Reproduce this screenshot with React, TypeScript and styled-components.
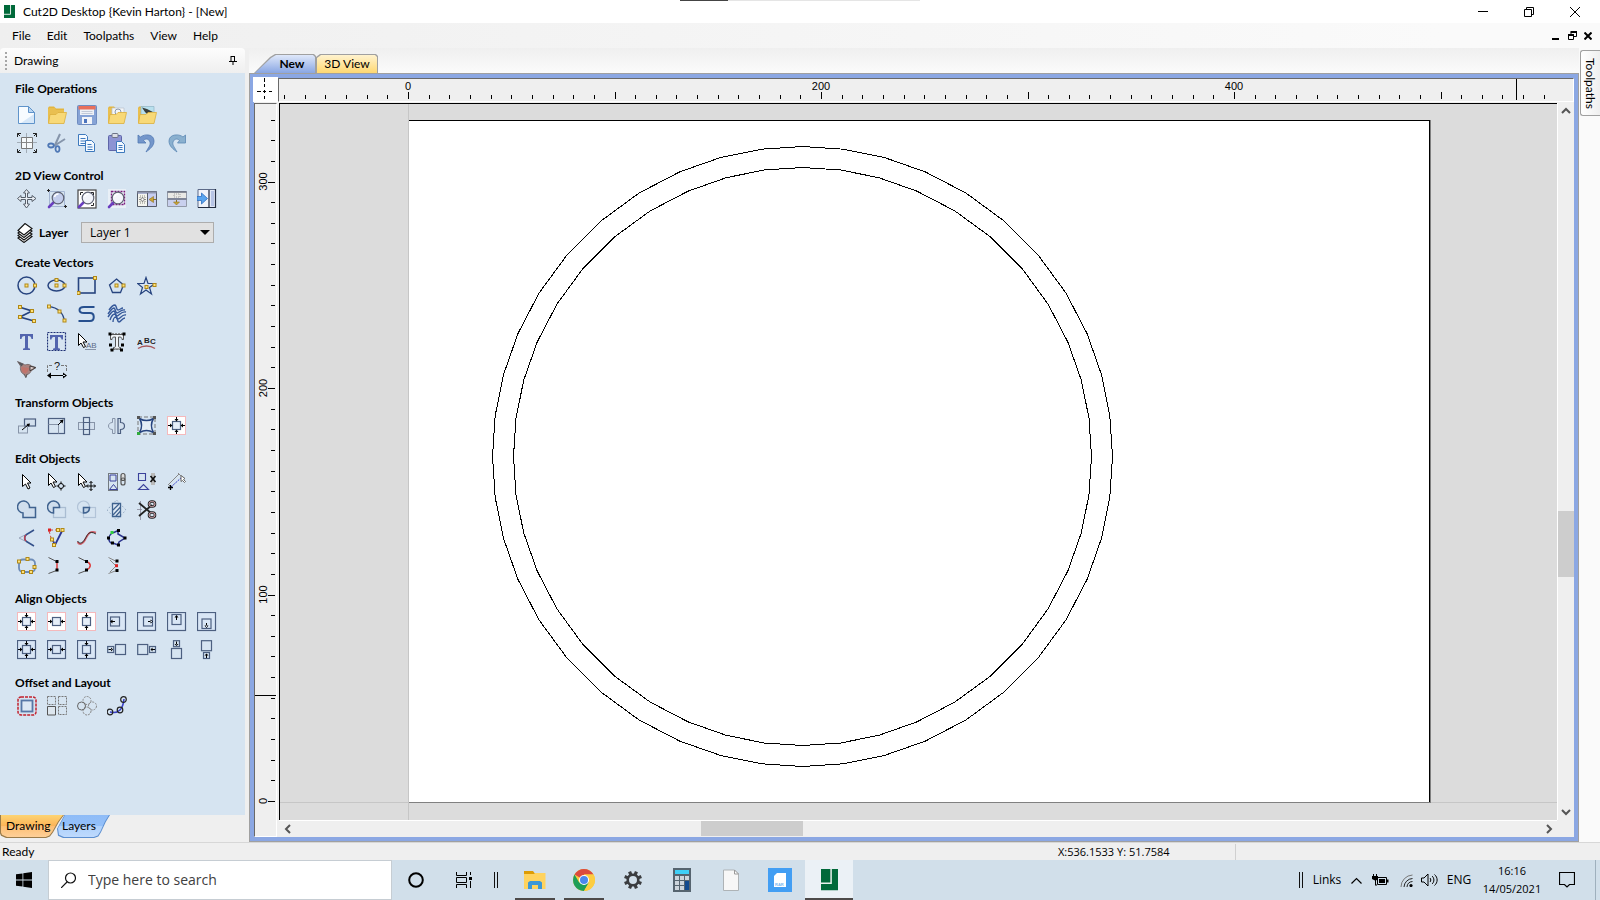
import React from 'react';
import styled, { createGlobalStyle, css } from 'styled-components';

const UI = `Lato, "Open Sans", sans-serif`;
const WIDE = `"Open Sans", "Noto Sans", sans-serif`;

const Global = createGlobalStyle`
  *, *::before, *::after { box-sizing: border-box; }
  html, body { margin: 0; padding: 0; }
  body { font: 12px/16px ${UI}; color: #000; background: #efefef; }
  button, select, input { font: inherit; color: inherit; margin: 0; }
  button { border: 0; padding: 0; background: none; }
  svg { display: block; flex: none; }
`;

/* ---------- icons ---------- */

const NAVY = '#27447f';
const SLATE = '#4c5f80';

const Node = ({ x, y }: { x: number; y: number }) => (
  <rect x={x - 1.5} y={y - 1.5} width="3" height="3" fill="#ffe27a" stroke="#b08818" strokeWidth="1" />
);
const Dot = ({ x, y, c = '#000' }: { x: number; y: number; c?: string }) => (
  <rect x={x - 1.5} y={y - 1.5} width="3" height="3" fill={c} />
);
const Folder = ({ children }: { children?: React.ReactNode }) => (
  <>
    <path d="M1 3l1-1.500h5l2 2h8v3H1z" fill="#e3b53f" />
    <path d="M1 4v14h14l2-2V5H9L8 3H2z" fill="#e9bf50" />
    {children}
    <path d="M1.500 18.500L3 9.500h6l2-2h8.500L17 18.500z" fill="#f8d978" stroke="#dcae3c" strokeWidth=".8" />
  </>
);
const Lens = ({ f = '#c3cdec' }: { f?: string }) => (
  <>
    <path d="M7 13l-5 5" stroke="#6a3fc0" strokeWidth="2.600" strokeLinecap="round" />
    <circle cx="11" cy="9" r="5.800" fill={f} stroke="#5e6272" strokeWidth="1.200" />
    <path d="M7.500 8a4 4 0 0 1 4-3" stroke="#fff" strokeWidth="1.500" fill="none" />
  </>
);
const Cursor = () => <path d="M5.500 2.500v12l3-2.500 2.500 5 2-1-2.500-5h3.500z" fill="#fff" stroke="#000" strokeWidth="1" />;
const CursorLeft = () => <path d="M1.500 1.500v12l2.500-2.500 2.500 4.500 2-1-2.500-4.500H10z" fill="#fff" stroke="#000" strokeWidth="1" />;

const arrowPaths: Record<string, string> = {
  l: 'M1 9h3v1H1zM3 7.500l2.500 2-2.500 2z',
  r: 'M18 9h-3v1h3zM16 7.500l-2.500 2 2.500 2z',
  t: 'M9 1v3h1V1zM7.500 3l2 2.500 2-2.500z',
  b: 'M9 18v-3h1v3zM7.500 16l2-2.500 2 2.500z',
};
const Arrows = ({ d }: { d: string }) => <path d={d.split('').map((k) => arrowPaths[k]).join('')} fill="#000" />;
const Sheet = () => <rect x=".5" y=".5" width="18" height="18" fill="#fff" stroke="#f5b9bc" />;
const Frame = () => <rect x=".5" y=".5" width="18" height="18" fill="#d9e6f5" stroke={SLATE} strokeWidth="1.200" />;
const Box = ({ x, y, w, h, f = 'none' }: { x: number; y: number; w: number; h: number; f?: string }) => (
  <rect x={x} y={y} width={w} height={h} fill={f} stroke={SLATE} strokeWidth="1.200" />
);

const icons: Record<string, React.ReactNode> = {
  new: (
    <>
      <path d="M1.500 1.500h10l6 6v11h-16z" fill="#f7fbff" stroke="#5f93ca" />
      <path d="M11.500 1.500v6h6z" fill="#b9d6f3" stroke="#5f93ca" />
      <path d="M4 18h13V9z" fill="#d6e7f8" />
    </>
  ),
  open: <Folder />,
  save: (
    <>
      <rect x=".5" y=".5" width="19" height="19" rx="1" fill="#86a3d6" stroke="#6f8cc0" />
      <path d="M3 1h14v9H3z" fill="#eef1f6" />
      <path d="M1.500 1h17v3.500h-17z" fill="#e8705c" />
      <path d="M4.500 6.500h11M4.500 8.500h11" stroke="#c2cad8" />
      <path d="M5 12h10v7H5z" fill="#f2f4f8" />
      <path d="M7 14h3v4H7z" fill="#4c74bd" />
    </>
  ),
  importVec: (
    <Folder>
      <path d="M5 3h12v9H5z" fill="#f4f6f8" stroke="#b8c0cc" strokeWidth=".7" />
      <circle cx="11" cy="7" r="3" fill="none" stroke="#8b98ac" />
    </Folder>
  ),
  importImg: (
    <Folder>
      <path d="M4 1.500h13v10H4z" fill="#b8e0ee" stroke="#8fb5c4" strokeWidth=".7" />
      <path d="M5 2.500l5 1.500 6 3-4 1-1 2-3-3z" fill="#3b3f3c" />
    </Folder>
  ),
  job: (
    <>
      <path d="M9.500 0v20M0 9.500h20" stroke="#a3adb7" />
      <path d="M4.500 4.500h11v11h-11z" fill="#f6f9fb" stroke="#777" />
      <path d="M9.500 4.500v11M4.500 9.500h11" stroke="#888" />
      <path d="M.5 4V.5H4M16 .5h3.500V4M19.500 16v3.500H16M4 19.500H.5V16M.5 .5L3 3M19.500 .5L17 3M19.500 19.500L17 17M.5 19.500L3 17" stroke="#222" fill="none" />
    </>
  ),
  cut: (
    <>
      <path d="M13 1L8 12M18 6L7 13" stroke="#8695ab" strokeWidth="2" />
      <ellipse cx="4" cy="12.500" rx="2.800" ry="2" fill="none" stroke="#4e77b5" strokeWidth="1.800" />
      <ellipse cx="10.500" cy="16" rx="2" ry="2.800" fill="none" stroke="#4e77b5" strokeWidth="1.800" />
    </>
  ),
  copy: (
    <g fill="#f4f9ff" stroke="#3d79bd">
      <path d="M1.500 1.500h7l2 2v9h-9z" />
      <path d="M3.500 5.500h5M3.500 8h5M3.500 10.500h5" />
      <path d="M8.500 7.500h6l3 3v8h-9z" />
      <path d="M10.500 11.500h4M10.500 14h5M10.500 16.500h5" />
    </g>
  ),
  paste: (
    <>
      <rect x="1.500" y="2.500" width="13" height="15" rx="1" fill="#8d94d4" stroke="#5e65a8" />
      <rect x="5" y=".5" width="6" height="4" rx="1" fill="#dcdfe6" stroke="#6d7488" />
      <path d="M9.500 8.500h5l3 3v8h-8z" fill="#f4f9ff" stroke="#3d79bd" />
      <path d="M11.500 12.500h4M11.500 14.500h4M11.500 16.500h4" stroke="#3d79bd" />
    </>
  ),
  undo: <path d="M1 2l2.500 2C8 .5 17 1 17 8c0 5-4 8-8 11 2-4 5-7 4-10S9 5 6.500 7.500L9 10H1z" fill="#7396cb" stroke="#5278b2" strokeWidth=".8" />,
  redo: <path d="M18.500 2L16 4C12 .5 2 1 2 8c0 5 4 8 8 11-2-4-5-7-4-10s4-4 6.500-1.500L10.500 10h8z" fill="#8ab0cf" stroke="#5c88b4" strokeWidth=".8" />,

  pan: (
    <path
      d="M9.500 .5L12.500 4h-2v4.500H15v-2l4 3-4 3v-2h-4.500V15h2l-3 4-3-4h2v-4.500H4v2l-3.500-3 3.500-3v2h4.500V4h-2z"
      fill="#e9eef4" stroke="#565e69" strokeWidth="1"
    />
  ),
  zoomBox: (
    <>
      <path d="M2.500 2.500h15v15h-15z" fill="none" stroke="#a5b6d2" />
      <path d="M0 1.500h3M1.500 0v3M17 17.500h3M18.500 16v3" stroke="#222" />
      <Lens />
    </>
  ),
  zoomAll: (
    <>
      <rect x="1" y="1" width="18" height="18" fill="#fff" stroke="#444" strokeWidth="1.200" />
      <path d="M3.500 6V3.500H6M14 3.500h2.500V6M16.500 14v2.500H14" stroke="#222" fill="none" />
      <Lens f="#f2f4fa" />
    </>
  ),
  zoomSel: (
    <>
      <path d="M1 0h18v19H1z" fill="#e9f0f7" />
      <path d="M4.500 2.500h13v13h-13z" fill="none" stroke="#7a1b7c" strokeWidth="1.400" strokeDasharray="2 1" />
      <Lens f="#f4f5fb" />
    </>
  ),
  tileV: (
    <>
      <path d="M.5 2.500h19v15H.5z" fill="#c6cdf0" stroke="#555b68" />
      <path d="M.5 2.500h19v2H.5z" fill="#8e95ad" />
      <path d="M1 5h9v12H1z" fill="#f4f4ee" />
      <path d="M10.500 4v13.500" stroke="#555b68" />
      <path d="M3 7h5v7H3z" fill="none" stroke="#8a8a80" strokeDasharray="1 1" />
      <path d="M5.500 8l1 2 2 .5-2 .5-1 2-1-2-2-.5 2-.5z" fill="#fff" stroke="#555" strokeWidth=".6" />
      <path d="M16.500 7.500v6l-4.500-3z" fill="#cba535" stroke="#8d7223" strokeWidth=".6" />
      <path d="M16 10.500h3" stroke="#8d7223" />
    </>
  ),
  tileH: (
    <>
      <path d="M.5 2.500h19v15H.5z" fill="#c9d0ee" stroke="#9299a8" />
      <path d="M1 3h18v6H1z" fill="#e9e9e5" />
      <path d="M.5 3h19M.5 10h19" stroke="#666c7c" strokeWidth="1.600" />
      <path d="M7 5h6v3H7z" fill="none" stroke="#a0a0a0" strokeDasharray="1 1" />
      <path d="M6.500 13h6l-3 3z" fill="#cba535" stroke="#8d7223" strokeWidth=".6" />
      <path d="M9.500 11v2" stroke="#8d7223" />
    </>
  ),
  dock: (
    <>
      <path d="M1 .5h17.500v18H1z" fill="#f0f3fa" stroke="#5c6a88" />
      <path d="M11 1h7v17h-7z" fill="#e2e8f7" />
      <path d="M12 1v18M18.500 0v19M1 18.500h18" stroke="#222c40" strokeWidth="1.200" />
      <path d="M14 2h3v15h-3z" fill="#b8c5e6" />
      <path d="M0 7.500h4.500V4l6 5.500-6 5.500v-3.500H0z" fill="#5aa5ef" stroke="#2d6fc0" strokeWidth=".8" />
    </>
  ),
  layers: (
    <g fill="#fff" stroke="#111" strokeWidth="1.100">
      <path d="M2 15l8-5 6 3.500-8 6z" />
      <path d="M2 12.500l8-5 6 3.500-8 6z" />
      <path d="M2 10l8-6 6 4-8 6.500z" />
      <path d="M2 7.500L9 .5l7 5-8 6.500z" />
    </g>
  ),

  circle: (<><circle cx="9.500" cy="9.500" r="8.500" fill="none" stroke={NAVY} strokeWidth="1.500" /><Node x={9.500} y={9.500} /><Node x={18} y={9.500} /></>),
  ellipse: (<><ellipse cx="9.500" cy="9.500" rx="8.500" ry="5.500" fill="none" stroke={NAVY} strokeWidth="1.500" /><Node x={9.500} y={9.500} /><Node x={17.500} y={9.500} /><Node x={9.500} y={4} /></>),
  rect: (<><rect x="1.500" y="2" width="16.500" height="15" fill="none" stroke={NAVY} strokeWidth="1.600" /><Node x={18} y={2} /><Node x={1.500} y={17} /></>),
  polygon: (<><path d="M9.500 3L16.500 9l-3 7.500h-8L2.500 9z" fill="none" stroke={NAVY} strokeWidth="1.300" /><Node x={9.500} y={9.500} /><Node x={16.500} y={9.500} /></>),
  star: (<><path d="M9 1.500l2 6h7l-5.500 4 2 6.500L9 14l-5.500 4 2-6.500L.5 7.500h6.500z" fill="#d7e5f2" stroke={NAVY} strokeWidth="1.200" /><Node x={9.500} y={11} /><Node x={17.500} y={9} /></>),
  polyline: (<><path d="M2 3l13 4L3 13l14 4" fill="none" stroke={NAVY} strokeWidth="1.800" /><Node x={3} y={3} /><Node x={15} y={7} /><Node x={3} y={13} /><Node x={17} y={17} /></>),
  arc: (<><path d="M2 2.500c8 1 14 6 15.500 14" fill="none" stroke={NAVY} strokeWidth="1.200" /><Node x={2} y={2.500} /><Node x={12.500} y={7.500} /><Node x={17.500} y={16.500} /></>),
  curve: <path d="M17.500 3H7C1 3 1 9 7 9h6c5 0 5 8 0 8H1.500" fill="none" stroke="#27508f" strokeWidth="2" />,
  texture: (
    <g fill="none" stroke="#35589a" strokeWidth="1.400">
      <path d="M2 6c2-3 4-5 6-5 2 1 1 5 3 5s3-2 5-2" />
      <path d="M1 10c2-3 4-6 6-6 2 1 1 5 3 5s4-4 8-3" />
      <path d="M1 13c2-3 4-6 6-6 2 1 1 5 3 5s4-5 9-4" />
      <path d="M3 16c1-3 3-6 5-6 2 1 1 5 3 5s4-5 8-4" />
      <path d="M6 18c0-2 1-5 3-5 2 1 1 5 3 5s3-4 6-4" />
    </g>
  ),
  text: <path d="M3 2h13v5h-1.500c-.3-2-1-3-3-3h-.5v11c0 1 .5 1.500 2 1.500V18H6v-1.500c1.500 0 2-.5 2-1.500V4h-.5c-2 0-2.700 1-3 3H3z" fill="#5264ae" />,
  textBox: (
    <>
      <rect x=".5" y=".5" width="18" height="18" fill="none" stroke="#1d2f74" strokeWidth="1.200" strokeDasharray="2 1" />
      <path d="M3 3h13v4.500h-1.500c-.3-2-1-2.500-3-2.500h-.5v10c0 1 .5 1.500 2 1.500V18H6v-1.500c1.500 0 2-.5 2-1.500V5h-.5c-2 0-2.700.5-3 2.500H3z" fill="#5264ae" />
    </>
  ),
  textSel: (
    <>
      <CursorLeft />
      <text x="9" y="16" fontSize="8" fontFamily="Liberation Sans" fill="#5b6b86">AB</text>
      <path d="M8 17.500h11" stroke="#8794a8" />
    </>
  ),
  textFit: (
    <>
      <path d="M3.500 2.500h13v5h-1.500c0-2-1-2.500-3-2.500h-.5v9c0 1 .5 1.500 2 1.500v1.500h-7v-1.500c1.500 0 2-.5 2-1.500V5H8c-2 0-3 .5-3 2.500H3.500z" fill="#eef2f6" stroke="#444" strokeWidth=".9" />
      <path d="M2 1.500h16M3 17.500h13" stroke="#777" strokeWidth=".8" strokeDasharray="2 1" />
      <Dot x={3} y={2} /><Dot x={17} y={2} /><Dot x={3.500} y={13} /><Dot x={15.500} y={13} /><Dot x={5} y={18} /><Dot x={14.500} y={18} />
    </>
  ),
  textCurve: (
    <>
      <g fontSize="8" fontWeight="700" fontFamily="Liberation Sans" fill="#222">
        <text x="0" y="13">A</text>
        <text x="7" y="11">B</text>
        <text x="13" y="12">C</text>
      </g>
      <path d="M1 16.500c5-3.500 12-3.500 17 0" fill="none" stroke="#a8585c" strokeWidth="1.500" />
    </>
  ),
  bird: (
    <>
      <path d="M.5 1.500l6 2.500c1 1 2 1 3 .5 2-.5 4 .5 5 1.500l4.500 1.500-5 3.500c-1 2.500-2 3-4 3.500l-1 2.500-1.500-2.500C4 13.500 3 10 3.500 6z" fill="#a9827f" stroke="#6a5c5c" strokeWidth=".7" />
      <path d="M4.500 7c0 4 1 6 3.500 6.500 2-.5 3.500-3 4-5.500z" fill="#c0736b" />
      <path d="M.5 1.500l6 2.500-2 2.500z" fill="#55565c" />
      <path d="M13 6l5.500 1.700-5.500 3z" fill="#dcc9c6" stroke="#222" strokeWidth=".8" />
      <path d="M7 14l2 4M10 14l-1 3.500" stroke="#555" strokeWidth=".8" />
    </>
  ),
  dimension: (
    <>
      <path d="M.5 12V5.500H6M14 5.500h5.500V12" fill="none" stroke="#777" strokeDasharray="3 1" />
      <text x="7" y="10" fontSize="11" fontFamily="Liberation Sans" fill="#111">?</text>
      <path d="M2 15h16v1H2zM0 15.500l4-3v6zM20 15.500l-4-3v6z" />
    </>
  ),

  move: (<><Box x={7.500} y={3} w={11} h={7} f="#d3e0ee" /><rect x="1.500" y="10" width="9" height="7" fill="none" stroke="#8794a8" /><path d="M5 14l6-5" stroke="#000" /><path d="M13 7.500l-1 3.500-2.500-3z" /></>),
  size: (<><Box x={1.500} y={2.500} w={16} h={15} /><path d="M1.500 8.500h10v9" fill="none" stroke="#8794a8" /><path d="M11 9l4-4" stroke="#000" /><path d="M16.500 3.500l-1 4-3-3z" /></>),
  rotate: (<><rect x="1.500" y="6.500" width="16" height="7" fill="#d3e0ee" stroke="#8794a8" /><Box x={6.500} y={1.500} w={6} h={17} /><path d="M6.500 6.500h6v7h-6z" fill="none" stroke={SLATE} /></>),
  mirror: (<><path d="M8 2.500v15H5.500v-4c-2.500 0-4-1.500-4-3.500s1.500-3.500 4-3.500v-4z" fill="none" stroke="#8794a8" /><path d="M11 2.500v15h2.500v-4c2.500 0 4-1.500 4-3.500s-1.500-3.500-4-3.500v-4z" fill="#d3e0ee" stroke={SLATE} strokeWidth="1.200" /></>),
  distort: (
    <>
      <rect x="1" y="1" width="17" height="17" fill="none" stroke="#777" strokeDasharray="4 2" />
      <path d="M2.500 2.500c5 3 9 3 14 0-3 5-3 9 0 14-5-3-9-3-14 0 3-5 3-9 0-14z" fill="#e4edf6" stroke={NAVY} strokeWidth="1.500" />
      <Dot x={1.500} y={1.500} c="#555" /><Dot x={17.500} y={1.500} c="#555" /><Dot x={17.500} y={17.500} c="#555" /><Dot x={1.500} y={17.500} c="#2faa3c" />
    </>
  ),
  centreAll: (<><Sheet /><Box x={5.500} y={5.500} w={8} h={8} f="#e5eef8" /><Arrows d="lrtb" /></>),

  select: <Cursor />,
  nodeEdit: (<><CursorLeft /><circle cx="14" cy="14" r="2.500" fill="#d7e4f2" stroke="#000" /><path d="M14 9.500v2M14 16.500v2M9.500 14h2M16.500 14h2" stroke="#000" /></>),
  moveSel: (<><CursorLeft /><path d="M14 9.500v9M9.500 14h9M12.500 11l1.500-1.500 1.500 1.500M12.500 17l1.500 1.500 1.500-1.500M11 12.500L9.500 14l1.500 1.500M17 12.500l1.500 1.500-1.500 1.500" stroke="#000" fill="none" /></>),
  group: (
    <>
      <path d="M1.500 1.500h9v17h-9z" fill="none" stroke="#111" strokeDasharray="1 1" />
      <path d="M3 3h6v6H3zM2.500 17.500l4-5 4 5z" fill="none" stroke="#3b419b" />
      <rect x="14" y="1.500" width="4" height="7" rx="2" fill="#ddd" stroke="#555" strokeWidth="1.200" />
      <rect x="14" y="6" width="4" height="7" rx="2" fill="none" stroke="#555" strokeWidth="1.200" />
    </>
  ),
  ungroup: (
    <>
      <path d="M1.500 1.500h7v7h-7zM1.500 17.500l5-5 5 5z" fill="none" stroke="#3b419b" strokeWidth="1.100" />
      <path d="M14 1h4v12h-4z" fill="#bbb" />
      <path d="M13.500 4l5 6M18.500 4l-5 6" stroke="#111" strokeWidth="1.600" />
    </>
  ),
  measure: (
    <>
      <path d="M1 13L12 2M1 12l3 3M11 1l3 3" stroke="#888" fill="none" />
      <path d="M4 15L15 5" stroke="#3038c8" strokeDasharray="2 1" />
      <path d="M1 15.500h5M3.500 13v5" stroke="#000" strokeWidth="1.300" />
      <path d="M14 3.500v6l1.500-1 2 2 1-1-2-2 1.500-1z" fill="#fff" stroke="#666" />
    </>
  ),
  weld: <path d="M12.500 7.500A6 6 0 1 0 6 13v4.500h12.500V7.500z" fill="#d0deed" stroke="#3f628f" strokeWidth="1.500" />,
  subtract: (<><rect x="6.500" y="7.500" width="12" height="10" fill="none" stroke="#aabdd2" strokeWidth="1.300" /><path d="M6.500 13A6 6 0 1 1 12.500 7.500h-6z" fill="#d0deed" stroke="#3f628f" strokeWidth="1.500" /></>),
  intersect: (<><circle cx="6.500" cy="7" r="6" fill="none" stroke="#b2c4d8" strokeWidth="1.200" /><rect x="6.500" y="7.500" width="12" height="10" fill="none" stroke="#b2c4d8" strokeWidth="1.200" /><path d="M6.500 7.500h6c0 3-2 5.500-6 5.500z" fill="#c3d4e6" stroke="#3f628f" strokeWidth="1.500" /></>),
  trim: (
    <>
      <path d="M9.500 0l9.500 10-9.500 10L0 10z" fill="none" stroke="#9db1c8" strokeDasharray="2 2" />
      <path d="M5.500 3.500h8v13h-8z" fill="#dfe9f4" stroke="#3f628f" strokeWidth="1.300" />
      <path d="M6 10l6-6M6 15l7.500-8M9 16l4.500-5" stroke="#3f628f" strokeWidth="1.300" />
    </>
  ),
  scissors: (
    <>
      <path d="M3.500 1v19M0 9.500h5" stroke="#889" strokeWidth=".8" />
      <path d="M2 3l12 10M2 16L15 5" stroke="#222" strokeWidth="1.800" />
      <rect x="12" y="1.500" width="6" height="5" rx="2.500" fill="none" stroke="#222" strokeWidth="2.600" />
      <rect x="12" y="12.500" width="6" height="5" rx="2.500" fill="none" stroke="#222" strokeWidth="2.600" />
      <rect x="12" y="1.500" width="6" height="5" rx="2.500" fill="none" stroke="#d9a9b2" strokeWidth="1" />
      <rect x="12" y="12.500" width="6" height="5" rx="2.500" fill="none" stroke="#d9a9b2" strokeWidth="1" />
    </>
  ),
  fillet: (<><path d="M8 7L2 10l6 3z" fill="none" stroke="#9aa6bc" /><path d="M17 2L9.500 6.500C7 8 7 12 9.500 13.500L17 18" fill="none" stroke="#33508a" strokeWidth="1.500" /><path d="M9 7c-2 2-2 4 0 6" stroke="#c04050" fill="none" strokeWidth="1.300" /></>),
  boundary: (<><path d="M3 2h8" stroke="#c44" strokeDasharray="3 2" /><path d="M2 3l3 10" stroke="#c44" strokeDasharray="3 2" /><path d="M15.500 2L8 17 5.500 11.500" stroke="#2b348e" strokeWidth="1.800" fill="none" /><Dot x={2.500} y={2} c="#d22" /><Node x={11} y={2} /><Node x={15.500} y={2} /><Node x={5} y={11.500} /><Node x={7} y={17} /></>),
  fit: (<><path d="M.5 14c2 3.500 5 2.500 7.500-2s4-10 11-7.500" fill="none" stroke="#d2606a" strokeWidth="1.800" /><path d="M.5 13c2 3.500 5 2.500 7.500-2s4-9 11-5" fill="none" stroke="#222" strokeWidth=".9" /></>),
  join: (<><path d="M5 4.500h2l4-2V6l7 4-6 4-1 3-5-2H4c-3-2-3-7 1-10z" fill="none" stroke="#2b348e" strokeWidth="1.500" /><Dot x={5} y={4.500} c="#2fd03c" /><Dot x={11.500} y={2.500} /><Dot x={18} y={10} /><Dot x={11.500} y={17} /><Dot x={5.500} y={15} /><Dot x={1.500} y={10} /></>),
  offsetNodes: (<><rect x="2" y="3.500" width="16" height="12.500" rx="4" fill="none" stroke="#6d8cb8" strokeWidth="1.800" /><Node x={10.500} y={3} /><Node x={2} y={5.500} /><Node x={17.500} y={11} /><Node x={14} y={16} /><Node x={6} y={16} /></>),
  joinLine: (<><path d="M1.500 1.500l8 4M9.500 14.500l-8 3" stroke="#555" fill="none" /><path d="M10 6v8" stroke="#d33" strokeWidth="1.400" /><Dot x={10} y={5.500} /><Dot x={10} y={14} /></>),
  joinCurve: (<><path d="M1.500 1.500l8 4M9.500 14.500l-8 3" stroke="#555" fill="none" /><path d="M9.500 5.500c5 2 5 6 0 8.500" fill="none" stroke="#d33" strokeWidth="1.400" /><Dot x={9.500} y={5.500} /><Dot x={9.500} y={14} /></>),
  joinMid: (<><path d="M1.500 1.500l8 4M9.500 14.500l-8 3M3 4l6 6-6 6" stroke="#888" fill="none" /><Dot x={10} y={5} /><Dot x={10} y={14.500} /><Dot x={9.500} y={9.700} c="#d22" /></>),

  alHc: (<><Sheet /><Box x={5.500} y={5.500} w={8} h={8} f="#e5eef8" /><Arrows d="lr" /></>),
  alVc: (<><Sheet /><Box x={5.500} y={5.500} w={8} h={8} f="#e5eef8" /><Arrows d="tb" /></>),
  inLeft: (<><Frame /><Box x={3.500} y={5} w={9} h={9} /><path d="M4 9h4v1H4zM3 9.500l2.500-2v4z" /></>),
  inRight: (<><Frame /><Box x={6.500} y={5} w={9} h={9} /><path d="M11 9h4v1h-4zM16 9.500l-2.500-2v4z" /></>),
  inTop: (<><Frame /><Box x={5} y={2.500} w={9} h={10} /><path d="M9 4v4h1V4zM9.500 3l-2 2.500h4z" /></>),
  inBottom: (<><Frame /><Box x={5} y={7} w={9} h={9.500} /><path d="M9 11v4h1v-4zM9.500 16l-2-2.500h4z" /></>),
  selC: (<><Frame /><Box x={5.500} y={5.500} w={8} h={8} /><Arrows d="lrtb" /></>),
  selH: (<><Frame /><Box x={5.500} y={5.500} w={8} h={8} /><Arrows d="lr" /></>),
  selV: (<><Frame /><Box x={5.500} y={5.500} w={8} h={8} /><Arrows d="tb" /></>),
  outLeft: (<><Box x={.7} y={6.500} w={6} h={6} /><Box x={8.500} y={4.500} w={10} h={10} /><path d="M1.500 9h3v1h-3zM6 9.500l-2-2v4z" /></>),
  outRight: (<><Box x={.7} y={4.500} w={10} h={10} /><Box x={12.500} y={6.500} w={6} h={6} /><path d="M15 9h3v1h-3zM13.500 9.500l2-2v4z" /></>),
  outTop: (<><Box x={6.500} y={.7} w={6} h={6} /><Box x={4.500} y={8.500} w={10} h={10} /><path d="M9 1.500v3h1v-3zM9.500 6l-2-2h4z" /></>),
  outBottom: (<><Box x={4.500} y={.7} w={10} h={10} /><Box x={6.500} y={12.500} w={6} h={6} /><path d="M9 15v3h1v-3zM9.500 13.500l-2 2h4z" /></>),

  offset: (<><rect x="1" y="1" width="18" height="18" rx="3" fill="none" stroke="#c2202c" strokeWidth="1.500" strokeDasharray="3 1" /><rect x="4.500" y="4.500" width="11" height="11" fill="#dde8f4" stroke="#5777a6" strokeWidth="1.800" /></>),
  array: (<><g fill="none" stroke="#777" strokeDasharray="2 1"><path d="M.5 .5h8v8h-8zM11.500 .5h8v8h-8zM11.500 10.500h8v8h-8z" /></g><path d="M.5 10.500h8v8.500h-8z" fill="#dde6ee" stroke="#555" /></>),
  circArray: (<g fill="none" stroke="#888" strokeDasharray="2 1"><circle cx="10" cy="4.500" r="4" /><circle cx="10" cy="15" r="4" /><circle cx="15.500" cy="10" r="4" /><circle cx="4.500" cy="10" r="4" stroke="#666" strokeDasharray="none" /></g>),
  curveArray: (<><path d="M3 16c9 2 13-3 14-13" fill="none" stroke="#3941c8" strokeWidth="1.600" /><g fill="none" stroke="#222" strokeWidth="1.200"><circle cx="3" cy="16" r="2.800" /><circle cx="13" cy="14" r="2.800" /><circle cx="16.500" cy="3.500" r="2.800" /></g></>),
};

/* ---------- title and menu ---------- */

const Shell = styled.div`
  min-height: 100vh;
  display: flex;
  flex-direction: column;
  background: #efefef;
`;

const TitleBar = styled.header`
  position: relative;
  display: flex;
  align-items: center;
  height: 23px;
  padding: 0 2px 0 4px;
  background: #fff;
`;

const TopEdge = styled.div`
  position: absolute;
  top: 0;
  left: 42.5%;
  width: 15%;
  height: 1px;
  background: linear-gradient(90deg, #444 0 20%, #e5e5e5 20% 100%);
`;

const Title = styled.h1`
  flex: 1;
  margin: 0 0 0 8px;
  font-size: 12px;
  font-weight: 400;
`;

const WinButton = styled.button<{ $w: number }>`
  width: ${(p) => p.$w}px;
  height: 20px;
  display: flex;
  align-items: center;
  justify-content: center;
`;

const MenuBar = styled.nav`
  display: flex;
  align-items: center;
  height: 25px;
  padding: 0 4px;
  background: linear-gradient(90deg, #efefef, #fafafa 90%);
`;

const MenuItem = styled.button`
  padding: 0 8px;
`;

const Grow = styled.div`
  flex: 1;
`;

/* ---------- sidebar ---------- */

const Main = styled.main`
  flex: 1;
  display: flex;
`;

const Sidebar = styled.aside`
  flex: none;
  width: 245px;
  margin-right: 4px;
  display: flex;
  flex-direction: column;
`;

const SideHead = styled.div`
  display: flex;
  align-items: center;
  height: 25px;
  padding: 0 7px 0 5px;
  background: linear-gradient(#fdfdfd, #efefef);
  border-radius: 4px 4px 0 0;
`;

const Grip = styled.span`
  width: 2px;
  height: 18px;
  margin-right: 7px;
  background: repeating-linear-gradient(#a6a6a6 0 2px, transparent 2px 4px);
`;

const Panel = styled.div`
  flex: 1;
  display: flex;
  flex-direction: column;
  gap: 10px;
  padding: 7px 0 0 12px;
  background: #d6e4f1;
`;

const Section = styled.section<{ $first?: boolean }>`
  h2 {
    margin: 0 0 ${(p) => (p.$first ? 3 : 0)}px;
    padding-left: 3px;
    font-size: 12px;
    line-height: 18px;
    font-weight: 700;
  }
`;

const ToolRow = styled.div`
  display: flex;
  height: 28px;
`;

const Tool = styled.button`
  width: 30px;
  height: 28px;
  display: grid;
  place-items: center;
`;

const LayerRow = styled.div`
  display: flex;
  align-items: center;
  height: 23px;
  margin-top: 8px;
  padding-left: 4px;
  label { width: 45px; padding-left: 3px; font-weight: 700; }
`;

const SelectWrap = styled.span`
  position: relative;
  width: 133px;
  svg { position: absolute; right: 4px; top: 8px; pointer-events: none; }
`;

const LayerSelect = styled.select`
  display: block;
  appearance: none;
  width: 100%;
  height: 21px;
  padding: 0 8px;
  border: 1px solid #adadad;
  border-radius: 0;
  background: #e1e1e1;
  font-family: ${WIDE};
`;

const SideTabs = styled.div`
  display: flex;
  height: 27px;
`;

const SideTab = styled.button<{ $blue?: boolean }>`
  position: relative;
  height: 23px;
  z-index: 1;
  width: 64px;
  padding: 0 8px 2px 6px;
  text-align: left;
  background: #9a7b4a;
  clip-path: polygon(0 0, 100% 0, 92% 30%, 83% 75%, 78% 93%, 72% 100%, 6px 100%, 1px 90%, 0 80%);
  &::before {
    content: '';
    position: absolute;
    inset: 0 1px 1px;
    z-index: -1;
    background: linear-gradient(#fdd474, #fdb357 50%, #fdbf74 52%, #fecf98);
    clip-path: inherit;
  }
  ${(p) =>
    p.$blue &&
    css`
      width: 53px;
      margin-left: -7px;
      padding-left: 5px;
      background: #5c8fd0;
      clip-path: polygon(14% 0, 100% 0, 92% 30%, 83% 75%, 78% 93%, 70% 100%, 6px 100%, 1px 90%, 0 60%);
      &::before {
        background: linear-gradient(#8fbcf7, #93c0fa 50%, #aed1fc 52%, #bfdafd);
      }
    `}
`;

/* ---------- document ---------- */

const Doc = styled.section`
  flex: 1;
  min-width: 0;
  display: flex;
  flex-direction: column;
`;

const DocTabs = styled.div`
  display: flex;
  align-items: flex-end;
  height: 25px;
  padding-left: 5px;
  background: linear-gradient(#efefef, #fbfbfb);
`;

const DocTab = styled.button<{ $active?: boolean }>`
  position: relative;
  z-index: 0;
  height: 19px;
  width: 62px;
  background: #a0a0a0;
  clip-path: polygon(0 3px, 4px 0, 60px 0, 62px 2px, 62px 100%, 0 100%);
  &::before {
    content: '';
    position: absolute;
    inset: 1px 1px 0;
    z-index: -1;
    background: linear-gradient(#fff3cf, #ffd871);
    clip-path: polygon(0 3px, 4px 0, 58px 0, 60px 2px, 60px 100%, 0 100%);
  }
  ${(p) =>
    p.$active &&
    css`
      width: 62px;
      padding-left: 14px;
      font-weight: 700;
      clip-path: polygon(0 100%, 16px 3px, 21px 0, 60px 0, 62px 2px, 62px 100%);
      &::before {
        background: linear-gradient(#dfe8fa, #89a6e3);
        clip-path: polygon(0 100%, 16px 3px, 21px 0, 58px 0, 60px 2px, 60px 100%);
      }
    `}
`;

const DocFrame = styled.div`
  flex: 1;
  display: grid;
  grid-template-columns: 25px minmax(0, 1fr) 17px;
  grid-template-rows: 25px minmax(0, 1fr) 17px;
  border: 1px solid #a0a0a0;
  background: #efefef;
  box-shadow: inset 0 0 0 4px #8ba7e3;
  padding: 3px 4px 4px 3px;
`;

const Corner = styled.div`
  display: grid;
  place-items: center;
  background: #fff;
`;

const HRuler = styled.div`
  grid-column: 2 / 4;
  margin-top: 1px;
  border: 1px solid #fff;
  border-top-color: #696969;
  border-left: 1px solid #696969;
  overflow: hidden;
  padding-right: 17px;
`;

const VRuler = styled.div`
  grid-row: 2 / 4;
  margin: 1px 1px 0;
  border: 1px solid #fff;
  border-top-color: #696969;
  border-left-color: #696969;
  position: relative;
  overflow: hidden;
`;

const FillSvg = styled.svg`
  width: 100%;
  height: 100%;
`;

const Canvas = styled.div`
  min-height: 0;
  margin-top: 1px;
  border-top: 1px solid #000;
  border-left: 1px solid #000;
  background: #dcdcdc;
  position: relative;
  overflow: hidden;
  margin-left: 1px;
`;

const CanvasSvg = styled(FillSvg)`
  position: absolute;
  inset: 0;
`;

const Arrow = styled.button`
  flex: none;
  width: 17px;
  height: 16px;
  display: grid;
  place-items: center;
`;

const Scroll = styled.div<{ $v?: boolean }>`
  display: flex;
  flex-direction: ${(p) => (p.$v ? 'column' : 'row')};
  ${(p) =>
    p.$v
      ? css`
          border-left: 1px solid #fff;
          margin-top: 1px;
          ${Arrow} { width: 15px; }
        `
      : css`
          border-top: 1px solid #fff;
          margin-left: 1px;
        `}
`;

const Space = styled.div<{ $n: number }>`
  flex: ${(p) => p.$n} 1 0;
`;

const Thumb = styled(Space)`
  background: #cdcdcd;
  margin: 0 0 1px;
`;

const RightDock = styled.aside`
  flex: none;
  width: 21px;
  padding: 2px 0 0 1px;
  background: #fafafa;
`;

const VTab = styled.button`
  width: 20px;
  height: 66px;
  padding-right: 1px;
  writing-mode: vertical-rl;
  line-height: 14px;
  border: 1px solid #a0a0a0;
  border-right: 0;
  border-radius: 3px 0 0 3px;
  background: linear-gradient(90deg, #fff, #efefef);
`;

/* ---------- status and taskbar ---------- */

const StatusBar = styled.footer`
  display: flex;
  align-items: center;
  height: 18px;
  border-top: 1px solid #d7d7d7;
  padding-left: 2px;
`;

const StatusCoords = styled.span`
  width: 178px;
  margin-right: 364px;
  border-right: 1px solid #d0d0d0;
  font: 11px/16px ${WIDE};
`;

const TaskBar = styled.div`
  display: flex;
  align-items: center;
  height: 40px;
  background: #d1dfea;
  font-family: ${WIDE};
`;

const TaskButton = styled.button<{ $state?: 'open' | 'active'; $gap?: number }>`
  position: relative;
  width: 48px;
  height: 40px;
  margin-right: ${(p) => p.$gap ?? 0}px;
  display: grid;
  place-items: center;
  background: ${(p) => (p.$state === 'active' ? '#ebf1f6' : 'none')};
  &::after {
    content: '';
    display: ${(p) => (p.$state ? 'block' : 'none')};
    position: absolute;
    bottom: 0;
    left: ${(p) => (p.$state === 'active' ? 0 : 4)}px;
    right: ${(p) => (p.$state === 'active' ? 0 : 4)}px;
    height: 2px;
    background: #4d4a49;
  }
`;

const SearchBox = styled.label`
  display: flex;
  align-items: center;
  gap: 12px;
  width: 344px;
  height: 40px;
  padding-left: 12px;
  background: #fff;
  border: 1px solid #c6cdd3;
  input {
    flex: 1;
    min-width: 0;
    border: 0;
    padding: 0;
    outline: 0;
    background: none;
    font-size: 14px;
    line-height: 20px;
  }
  input::placeholder { color: #404040; opacity: 1; }
`;

const Bars = styled.span<{ $after?: number }>`
  width: 4px;
  height: 16px;
  margin-right: ${(p) => p.$after ?? 0}px;
  border: 1px solid #111;
  border-width: 0 1px;
`;

const Tray = styled.div`
  margin-left: auto;
  display: flex;
  align-items: center;
`;

const TrayButton = styled.button<{ $w: number; $after?: number }>`
  width: ${(p) => p.$w}px;
  height: 40px;
  margin-right: ${(p) => p.$after ?? 0}px;
  display: flex;
  justify-content: center;
  align-items: center;
`;

const Clock = styled.button`
  width: 76px;
  height: 40px;
  font-size: 11px;
  line-height: 18px;
  text-align: center;
  time { display: block; }
`;

const ShowDesktop = styled.button`
  width: 5px;
  height: 40px;
  border-left: 1px solid #9fb0bd;
`;

/* ---------- data ---------- */

type ToolDef = [string, string];
const fileRows: ToolDef[][] = [
  [['new', 'New'], ['open', 'Open'], ['save', 'Save'], ['importVec', 'Import vectors'], ['importImg', 'Import bitmap']],
  [['job', 'Job setup'], ['cut', 'Cut'], ['copy', 'Copy'], ['paste', 'Paste'], ['undo', 'Undo'], ['redo', 'Redo']],
];
const viewRows: ToolDef[][] = [
  [['pan', 'Pan'], ['zoomBox', 'Zoom box'], ['zoomAll', 'Zoom to fit'], ['zoomSel', 'Zoom selected'], ['tileV', 'Tile vertically'], ['tileH', 'Tile horizontally'], ['dock', 'Switch to toolpaths']],
];
const sections: { title: string; rows: ToolDef[][] }[] = [
  {
    title: 'Create Vectors',
    rows: [
      [['circle', 'Circle'], ['ellipse', 'Ellipse'], ['rect', 'Rectangle'], ['polygon', 'Polygon'], ['star', 'Star']],
      [['polyline', 'Polyline'], ['arc', 'Arc'], ['curve', 'Curve'], ['texture', 'Texture']],
      [['text', 'Text'], ['textBox', 'Text in box'], ['textSel', 'Edit text'], ['textFit', 'Fit text'], ['textCurve', 'Text on curve']],
      [['bird', 'Trace bitmap'], ['dimension', 'Dimension']],
    ],
  },
  {
    title: 'Transform Objects',
    rows: [[['move', 'Move'], ['size', 'Size'], ['rotate', 'Rotate'], ['mirror', 'Mirror'], ['distort', 'Distort'], ['centreAll', 'Centre in material']]],
  },
  {
    title: 'Edit Objects',
    rows: [
      [['select', 'Select'], ['nodeEdit', 'Node edit'], ['moveSel', 'Transform'], ['group', 'Group'], ['ungroup', 'Ungroup'], ['measure', 'Measure']],
      [['weld', 'Weld'], ['subtract', 'Subtract'], ['intersect', 'Intersect'], ['trim', 'Trim'], ['scissors', 'Interactive trim']],
      [['fillet', 'Fillet'], ['boundary', 'Boundary'], ['fit', 'Fit curves'], ['join', 'Join']],
      [['offsetNodes', 'Close vector'], ['joinLine', 'Join with line'], ['joinCurve', 'Join with curve'], ['joinMid', 'Join at midpoint']],
    ],
  },
  {
    title: 'Align Objects',
    rows: [
      [['centreAll', 'Centre in job'], ['alHc', 'Centre horizontally'], ['alVc', 'Centre vertically'], ['inLeft', 'Align left'], ['inRight', 'Align right'], ['inTop', 'Align top'], ['inBottom', 'Align bottom']],
      [['selC', 'Centre to selection'], ['selH', 'Centre X'], ['selV', 'Centre Y'], ['outLeft', 'Outside left'], ['outRight', 'Outside right'], ['outTop', 'Outside top'], ['outBottom', 'Outside bottom']],
    ],
  },
  {
    title: 'Offset and Layout',
    rows: [[['offset', 'Offset'], ['array', 'Array copy'], ['circArray', 'Circular copy'], ['curveArray', 'Copy along curve']]],
  },
];

const Rows = ({ rows }: { rows: ToolDef[][] }) => (
  <>
    {rows.map((row, i) => (
      <ToolRow key={i}>
        {row.map(([id, label]) => (
          <Tool key={id} aria-label={label}>
            <svg width="20" height="20" viewBox="0 0 20 20">{icons[id]}</svg>
          </Tool>
        ))}
      </ToolRow>
    ))}
  </>
);

/* ---------- drawing ---------- */

const PX_PER_MM = 2.065;
const ORIGIN_X = 128;
const ORIGIN_Y = 697;
const ANGLES = [0, 7.6, 15.3, 23.3, 31.8, 40.5, 49.5, 58.2, 66.7, 74.7, 82.4];

const ring = (cx: number, cy: number, r: number) =>
  [0, 90, 180, 270]
    .flatMap((q) => ANGLES.map((a) => ((a + q) * Math.PI) / 180))
    .map((t) => `${(cx + r * Math.sin(t)).toFixed(1)},${(cy - r * Math.cos(t)).toFixed(1)}`)
    .join(' ');

const hTicks = Array.from({ length: 160 }, (_, i) => i - 6);
const vTicks = Array.from({ length: 34 }, (_, i) => i);

const Label = styled.text`
  font: 11px "Liberation Sans", sans-serif;
  text-anchor: middle;
`;

const Logo = ({ s }: { s: number }) => (
  <svg width={s} height={s * 1.25} viewBox="0 0 16 20">
    <path d="M0 0h16v20H0z" fill="#00693a" />
    <path d="M9.500 0v13.500H0" fill="none" stroke="#e8f0ec" strokeWidth="1.400" />
  </svg>
);

const chevrons = { up: 'M1 7l4-4 4 4', down: 'M1 3l4 4 4-4', left: 'M7 1L3 5l4 4', right: 'M3 1l4 4-4 4' };
const Chevron = ({ to }: { to: keyof typeof chevrons }) => (
  <svg width="10" height="10" viewBox="0 0 10 10"><path d={chevrons[to]} fill="none" stroke="#555" strokeWidth="2" /></svg>
);

export default function App() {
  return (
    <Shell>
      <Global />
      <TitleBar>
        <TopEdge />
        <Logo s={11} />
        <Title>Cut2D Desktop {'{'}Kevin Harton{'}'} - [New]</Title>
        <WinButton $w={46} aria-label="Minimise"><svg width="10" height="10"><path d="M0 4.500h10" stroke="#000" /></svg></WinButton>
        <WinButton $w={46} aria-label="Restore"><svg width="10" height="10"><path d="M.5 2.500h7v7h-7zM2.500 2.500v-2h7v7h-2" fill="none" stroke="#000" /></svg></WinButton>
        <WinButton $w={46} aria-label="Close"><svg width="10" height="10"><path d="M0 0l10 10M10 0L0 10" stroke="#000" /></svg></WinButton>
      </TitleBar>
      <MenuBar>
        {['File', 'Edit', 'Toolpaths', 'View', 'Help'].map((m) => <MenuItem key={m}>{m}</MenuItem>)}
        <Grow />
        <WinButton $w={16} aria-label="Minimise document"><svg width="8" height="9"><path d="M0 8h7" stroke="#000" strokeWidth="2" /></svg></WinButton>
        <WinButton $w={16} aria-label="Restore document"><svg width="9" height="9"><path d="M.5 4.500h5v4h-5zM3 4V1.500h5.500v4H6" fill="none" stroke="#000" /><path d="M0 4h6M2.500 1h6.500" stroke="#000" strokeWidth="2" /></svg></WinButton>
        <WinButton $w={16} aria-label="Close document"><svg width="8" height="8"><path d="M.5 .5l7 7M7.500 .5l-7 7" stroke="#000" strokeWidth="2" /></svg></WinButton>
      </MenuBar>

      <Main>
        <Sidebar>
          <SideHead>
            <Grip />
            <span>Drawing</span>
            <Grow />
            <WinButton $w={10} aria-label="Pin panel">
              <svg width="8" height="9"><path d="M2 .5h4M2 0v5M5.500 0v5M0 5.500h8M4 5v4" stroke="#000" fill="none" /></svg>
            </WinButton>
          </SideHead>
          <Panel>
            <Section $first><h2>File Operations</h2><Rows rows={fileRows} /></Section>
            <Section>
              <h2>2D View Control</h2>
              <Rows rows={viewRows} />
              <LayerRow>
                <svg width="20" height="20" viewBox="0 0 20 20">{icons.layers}</svg>
                <label htmlFor="layer">Layer</label>
                <SelectWrap>
                  <LayerSelect id="layer"><option>Layer 1</option></LayerSelect>
                  <svg width="10" height="6"><path d="M0 0h10L5 5z" /></svg>
                </SelectWrap>
              </LayerRow>
            </Section>
            {sections.map((s) => <Section key={s.title}><h2>{s.title}</h2><Rows rows={s.rows} /></Section>)}
          </Panel>
          <SideTabs>
            <SideTab>Drawing</SideTab>
            <SideTab $blue>Layers</SideTab>
          </SideTabs>
        </Sidebar>

        <Doc>
          <DocTabs>
            <DocTab $active>New</DocTab>
            <DocTab>3D View</DocTab>
          </DocTabs>
          <DocFrame>
            <Corner>
              <svg width="17" height="23" shapeRendering="crispEdges">
                <path d="M7.500 0v4M7.500 6v3M7.500 12v3M7.500 18v3M0 13.500h4M6 13.500h3M12 13.500h3" stroke="#000" />
              </svg>
            </Corner>
            <HRuler>
              <FillSvg shapeRendering="crispEdges">
                {hTicks.map((k) => {
                  const x = Math.round(ORIGIN_X + 1 + k * 10 * PX_PER_MM);
                  return <rect key={k} x={x} y={k % 10 ? 16 : 13} width="1" height={k % 10 ? 4 : 7} />;
                })}
                {[0, 200, 400].map((v) => <Label key={v} x={ORIGIN_X + 1 + v * PX_PER_MM} y="11">{v}</Label>)}
                <rect x="1237" y="0" width="1" height="21" />
              </FillSvg>
            </HRuler>
            <VRuler>
              <CanvasSvg shapeRendering="crispEdges">
                {vTicks.map((k) => {
                  const y = Math.round(ORIGIN_Y - k * 10 * PX_PER_MM);
                  return <rect key={k} x={k % 10 ? 16 : 13} y={y} width={k % 10 ? 4 : 7} height="1" />;
                })}
                {[0, 100, 200, 300].map((v) => {
                  const y = ORIGIN_Y - v * PX_PER_MM;
                  return <Label key={v} x="12" y={y} transform={`rotate(-90 12 ${y})`}>{v}</Label>;
                })}
                <rect x="0" y="591" width="22" height="1" />
              </CanvasSvg>
            </VRuler>
            <Canvas>
              <CanvasSvg shapeRendering="crispEdges">
                <path d="M128.500 0v1600M0 698.500h3000" stroke="#c6c6c6" />
                <rect x="129" y="16" width="1022" height="683" fill="#808080" />
                <rect x="129" y="16" width="1021" height="682" fill="#000" />
                <rect x="129" y="17" width="1020" height="681" fill="#fff" />
                <polygon points={ring(522.5, 352.5, 310)} fill="none" stroke="#000" />
                <polygon points={ring(522.5, 352.5, 289)} fill="none" stroke="#000" />
              </CanvasSvg>
            </Canvas>
            <Scroll $v>
              <Arrow aria-label="Scroll up"><Chevron to="up" /></Arrow>
              <Space $n={391} /><Thumb $n={66} /><Space $n={225} />
              <Arrow aria-label="Scroll down"><Chevron to="down" /></Arrow>
            </Scroll>
            <Scroll>
              <Arrow aria-label="Scroll left"><Chevron to="left" /></Arrow>
              <Space $n={405} /><Thumb $n={102} /><Space $n={737} />
              <Arrow aria-label="Scroll right"><Chevron to="right" /></Arrow>
            </Scroll>
          </DocFrame>
        </Doc>
        <RightDock><VTab>Toolpaths</VTab></RightDock>
      </Main>

      <StatusBar>
        <span>Ready</span>
        <Grow />
        <StatusCoords>X:536.1533 Y: 51.7584</StatusCoords>
      </StatusBar>

      <TaskBar>
        <TaskButton aria-label="Start">
          <svg width="16" height="16"><path d="M0 2.300l6.500-.9v6.200H0zM7.300 1.300L16 0v7.600H7.300zM0 8.400h6.500v6.200L0 13.700zM7.300 8.400H16V16l-8.700-1.300z" /></svg>
        </TaskButton>
        <SearchBox>
          <svg width="15" height="16"><circle cx="9.500" cy="6" r="5" fill="none" stroke="#111" strokeWidth="1.200" /><path d="M6 10l-6 6" stroke="#111" strokeWidth="1.200" /></svg>
          <input placeholder="Type here to search" aria-label="Search" />
        </SearchBox>
        <TaskButton aria-label="Cortana"><svg width="16" height="16"><circle cx="8" cy="8" r="6.800" fill="none" stroke="#000" strokeWidth="2" /></svg></TaskButton>
        <TaskButton aria-label="Task view" $gap={6}>
          <svg width="16" height="16"><path d="M.5 0v3.500h10V0M.5 16v-3.500h10V16M.5 5.500h10v5H.5zM14.500 0v3M14.500 9v7" fill="none" stroke="#000" /><path d="M13 5h3v3h-3z" /></svg>
        </TaskButton>
        <Bars $after={13} />
        <TaskButton aria-label="File Explorer" $state="open" $gap={1}>
          <svg width="22" height="18"><path d="M0 0h9l1.500 2H21v3H0z" fill="#dd9c05" /><path d="M0 3h10l1-1h10.500v16H0z" fill="#ffd35e" /><path d="M4 18v-6.500L6 10h10l2 1.500V18h-4v-4H8v4z" fill="#3c97d7" /></svg>
        </TaskButton>
        <TaskButton aria-label="Chrome" $state="open" $gap={1}>
          <svg width="22" height="22" viewBox="0 0 22 22">
            <circle cx="11" cy="11" r="11" fill="#f9ca3e" />
            <path d="M11 11L1.500 5.500A11 11 0 0 1 20.500 5.500H11z" fill="#db4a3e" />
            <path d="M1.500 5.500A11 11 0 0 0 11 22l4.800-8.300L11 11 6.300 13.700z" fill="#1e9e59" />
            <path d="M11 5.500h9.500A11 11 0 0 1 11 22l4.800-8.300z" fill="#fdcd41" />
            <circle cx="11" cy="11" r="5" fill="#fff" /><circle cx="11" cy="11" r="4" fill="#4a87ee" />
          </svg>
        </TaskButton>
        <TaskButton aria-label="Settings" $gap={1}>
          <svg width="18" height="18" viewBox="0 0 18 18">
            <circle cx="9" cy="9" r="5.300" fill="none" stroke="#3b3d40" strokeWidth="2.600" />
            {[22.5, 67.5, 112.5, 157.5, 202.5, 247.5, 292.5, 337.5].map((a) => <path key={a} d="M7.400 0h3.200v3.500H7.400z" fill="#3b3d40" transform={`rotate(${a} 9 9)`} />)}
          </svg>
        </TaskButton>
        <TaskButton aria-label="Calculator" $gap={1}>
          <svg width="18" height="24"><path d="M0 0h18v24H0z" fill="#56646f" /><path d="M2 2h14v4H2z" fill="#3fd0f7" />
            <path d="M2 8h4v4H2zM7 8h4v4H7zM12 8h4v4h-4zM2 13h4v4H2zM7 13h4v4H7zM2 18h4v4H2zM7 18h4v4H7z" fill="#cdd5dc" /><path d="M12 13h4v9h-4z" fill="#134a8e" /></svg>
        </TaskButton>
        <TaskButton aria-label="Document" $gap={1}>
          <svg width="16" height="22"><path d="M.5 1h11l4 4v16.500H.5z" fill="#f7f7f7" stroke="#aeb3b6" /><path d="M11.500 1v4h4z" fill="#fff" stroke="#999" /></svg>
        </TaskButton>
        <TaskButton aria-label="RAR" $gap={1}>
          <svg width="24" height="24"><path d="M0 0h24v24H0z" fill="#429ef3" /><path d="M9 5h9v14H6V8z" fill="#fff" /><text x="7" y="18" fontSize="4" fontWeight="700" fontFamily="Liberation Sans" fill="#7cb8ee">RAR</text></svg>
        </TaskButton>
        <TaskButton aria-label="Cut2D Desktop" $state="active"><Logo s={17} /></TaskButton>

        <Tray>
          <Bars />
          <TrayButton $w={48}>Links</TrayButton>
          <TrayButton $w={11} aria-label="Show hidden icons"><svg width="11" height="7"><path d="M.5 6.500l5-5 5 5" fill="none" stroke="#000" strokeWidth="1.200" /></svg></TrayButton>
          <TrayButton $w={36} aria-label="Battery"><svg width="17" height="12"><path d="M5.500 3.500h9v7h-9z" fill="none" stroke="#000" /><path d="M7 5h6v4H7zM15 5.500h1.500v3H15zM0 2h6v3L4 6.500v4h1v1H3v-5L0 5zM1 0h1v2H1zM4 0h1v2H4z" /></svg></TrayButton>
          <TrayButton $w={16} aria-label="Network"><svg width="13" height="13"><g fill="none" stroke="#222"><path d="M1 13A12 12 0 0 1 12.500 1" stroke="#777" /><path d="M4 13a9 9 0 0 1 8.500-8.500M7 13a6 6 0 0 1 5.500-5.500" /></g><circle cx="11" cy="11.500" r="1.600" /></svg></TrayButton>
          <TrayButton $w={30} aria-label="Volume"><svg width="17" height="14"><path d="M.5 5h2.500l4-4v12l-4-4H.5zM9 5c1 1 1 3 0 4M11 3c2.500 2 2.500 6 0 8M13.500 1.500c3.500 3 3.500 8 0 11" fill="none" stroke="#000" /></svg></TrayButton>
          <TrayButton $w={30}>ENG</TrayButton>
          <Clock><time>16:16</time><time>14/05/2021</time></Clock>
          <TrayButton $w={34} $after={11} aria-label="Notifications"><svg width="16" height="16"><path d="M.5 .5h15v12h-5L8 15l-2.500-2.500h-5z" fill="none" stroke="#000" strokeWidth="1.200" /></svg></TrayButton>
          <ShowDesktop aria-label="Show desktop" />
        </Tray>
      </TaskBar>
    </Shell>
  );
}
